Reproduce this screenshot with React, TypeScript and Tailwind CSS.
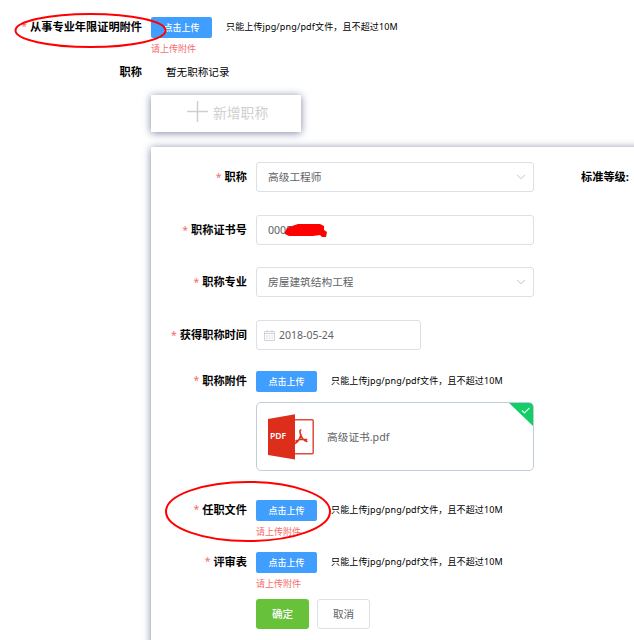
import React from "react";

const UploadButton = () => (
  <button className="h-[21px] w-[61px] shrink-0 rounded-[2px] bg-[#409eff] text-[9px] leading-[21px] font-medium text-white">
    点击上传
  </button>
);

const Upload = ({ error }: { error?: boolean }) => (
  <div>
    <div className="flex items-start">
      <UploadButton />
      <span className="ml-[14px] text-[9px] leading-[19px] tracking-[0.14px] whitespace-nowrap text-black">
        只能上传jpg/png/pdf文件，且不超过10M
      </span>
    </div>
    {error && (
      <div className="mt-[4px] text-[9px] leading-[14px] text-[#f56c6c]">
        请上传附件
      </div>
    )}
  </div>
);

const Label = ({ text, required }: { text: string; required?: boolean }) => (
  <div className="flex h-full w-full justify-end pr-[9px] text-[11.2px] font-bold whitespace-nowrap text-black">
    {required && (
      <span className="mr-[3px] text-[10.5px] font-normal text-[#f56c6c]">*</span>
    )}
    {text}
  </div>
);

const FormItem = ({
  label,
  className,
  labelClass,
  children,
}: {
  label: string;
  className: string;
  labelClass: string;
  children: React.ReactNode;
}) => (
  <div className={`flex items-start ${className}`}>
    <div className={`w-[105px] shrink-0 ${labelClass}`}>
      <Label text={label} required />
    </div>
    {children}
  </div>
);

const ArrowDown = () => (
  <svg className="h-[6px] w-[10px]" viewBox="0 0 10 6" fill="none">
    <path d="M1 0.8 L5 4.8 L9 0.8" stroke="#c0c4cc" strokeWidth="1" />
  </svg>
);

const Calendar = () => (
  <svg className="h-[11px] w-[11px]" viewBox="0 0 11 11" fill="none" stroke="#d0d3d9">
    <path d="M0.5 1.5h10v9h-10zM0.5 3.5h10M3 0v2.5M8 0v2.5" />
    <path d="M2 6h7M2 8.2h7" strokeDasharray="1.6 1.1" />
  </svg>
);

const PdfIcon = () => (
  <svg className="h-[46px] w-[47px]" viewBox="0 0 47 46">
    <rect x="20" y="5.7" width="25.2" height="34" rx="1" fill="#fff" stroke="#e04a3a" strokeWidth="1.5" />
    <path
      d="M32.8 16c-1.4 0-.9 2.8.1 5.5 1.2 3.2 3.5 5.1 5.9 6M33 20.5c-.8 3.8-2.6 7-5.6 8.7M28 26.8c3-1.4 6.1-2.1 10.5-1.2"
      fill="none"
      stroke="#dc3220"
      strokeWidth="1.6"
      strokeLinecap="round"
    />
    <path d="M0 5 L27 0.2 V45.5 L0 41z" fill="#dd2e1b" />
    <text x="2" y="25" fill="#fff" fontSize="8" fontWeight="600" textLength="16.2" lengthAdjust="spacingAndGlyphs">
      PDF
    </text>
  </svg>
);

const Select = ({ value }: { value: string }) => (
  <div className="flex h-[30px] w-[278px] items-center justify-between rounded-[3px] border border-[#dcdfe6] pr-[7px] pl-[11px] text-[10.7px] text-[#606266]">
    <span className="pt-px">{value}</span>
    <ArrowDown />
  </div>
);

const FileCard = () => (
  <div className="relative mt-[10px] flex h-[69px] w-[278px] items-center overflow-hidden rounded-[5px] border border-[#c0ccda] pl-[11px]">
    <PdfIcon />
    <span className="ml-[12px] pt-[2px] text-[10.7px] text-[#606266]">高级证书.pdf</span>
    <svg className="absolute -top-px -right-px h-[25px] w-[26px]" viewBox="0 0 26 25">
      <path d="M0 0H26V25z" fill="#13ce66" />
      <path d="M14 8.5l2.5 2.3 5-5" fill="none" stroke="#fff" strokeWidth="1.1" />
    </svg>
  </div>
);

const TitlePanel = () => (
  <div className="mt-[15px] ml-[151px] flex h-[510px] w-[700px] flex-col bg-white pt-[15px] shadow-[0_1px_8px_#7f84a4]">
    <div className="flex items-start">
      <FormItem label="职称" className="h-[30px]" labelClass="leading-[30px]">
        <Select value="高级工程师" />
      </FormItem>
      <div className="ml-[47px] text-[11.2px] leading-[30px] font-bold text-black">
        标准等级:
      </div>
    </div>
    <FormItem label="职称证书号" className="mt-[23px] h-[30px]" labelClass="leading-[30px]">
      <div className="relative flex h-[30px] w-[278px] items-center rounded-[3px] border border-[#dcdfe6] pl-[11px] text-[10.6px] text-[#606266]">
        <span className="pt-px">0005</span>
        <svg className="absolute top-[7px] left-[27px] h-[16px] w-[45px]" viewBox="0 0 45 16">
          <path d="M1 9 L3 5 L8 3 L14 1 L36 1 L40 3 L40 7 L43 9 L42 14 L38 14 L36 12 L29 13 L5 13 L1 11z" fill="#f00" />
        </svg>
      </div>
    </FormItem>
    <FormItem label="职称专业" className="mt-[22px] h-[30px]" labelClass="leading-[30px]">
      <Select value="房屋建筑结构工程" />
    </FormItem>
    <FormItem label="获得职称时间" className="mt-[23px] h-[30px]" labelClass="leading-[30px]">
      <div className="flex h-[30px] w-[165px] items-center rounded-[3px] border border-[#dcdfe6] pl-[7px] text-[10.5px] text-[#606266]">
        <Calendar />
        <span className="ml-[4px] pt-px">2018-05-24</span>
      </div>
    </FormItem>
    <FormItem label="职称附件" className="mt-[21px] h-[100px]" labelClass="leading-[19px]">
      <div>
        <Upload />
        <FileCard />
      </div>
    </FormItem>
    <FormItem label="任职文件" className="mt-[29px] h-[39px]" labelClass="leading-[19px]">
      <Upload error />
    </FormItem>
    <FormItem label="评审表" className="mt-[13px] h-[39px]" labelClass="leading-[19px]">
      <Upload error />
    </FormItem>
    <div className="mt-[8px] ml-[105px] flex gap-2 text-[10.6px]">
      <button className="h-[30px] w-[53px] rounded-[3px] bg-[#67c23a] pt-px font-medium text-white">确定</button>
      <button className="h-[30px] w-[53px] rounded-[3px] border border-[#dcdfe6] bg-white pt-px text-[#606266]">取消</button>
    </div>
  </div>
);

const App = () => {
  return (
    <div className="relative h-[640px] w-[634px] overflow-hidden bg-white font-['Noto_Sans','Noto_Sans_CJK_SC',sans-serif]">
      <div className="flex h-[56px] items-start pt-[17px]">
        <div className="w-[151px] shrink-0 leading-[19px]">
          <Label text="从事专业年限证明附件" required />
        </div>
        <Upload error />
      </div>
      <div className="mt-[6px] flex h-[20px] leading-[20px]">
        <div className="w-[151px] shrink-0">
          <Label text="职称" />
        </div>
        <span className="ml-[15px] text-[10.6px] text-black">暂无职称记录</span>
      </div>
      <button className="mt-[13px] ml-[151px] flex h-[37px] w-[150px] items-center bg-white pl-[36px] text-[13.8px] text-[#cfcfcf] shadow-[0_1px_8px_#7f84a4]">
        <svg className="mr-[5px] mb-[5px] h-[21px] w-[21px]" viewBox="0 0 21 21">
          <path d="M10.5 0V21M0 10.5H21" stroke="#cfcfcf" strokeWidth="1.5" />
        </svg>
        新增职称
      </button>
      <TitlePanel />
      <svg className="pointer-events-none absolute inset-0 h-full w-full" fill="none" stroke="#f00" strokeWidth="2">
        <ellipse cx="90.5" cy="30.5" rx="75" ry="16.5" />
        <ellipse cx="248" cy="511.5" rx="82" ry="29.5" />
      </svg>
    </div>
  );
};

export default App;
